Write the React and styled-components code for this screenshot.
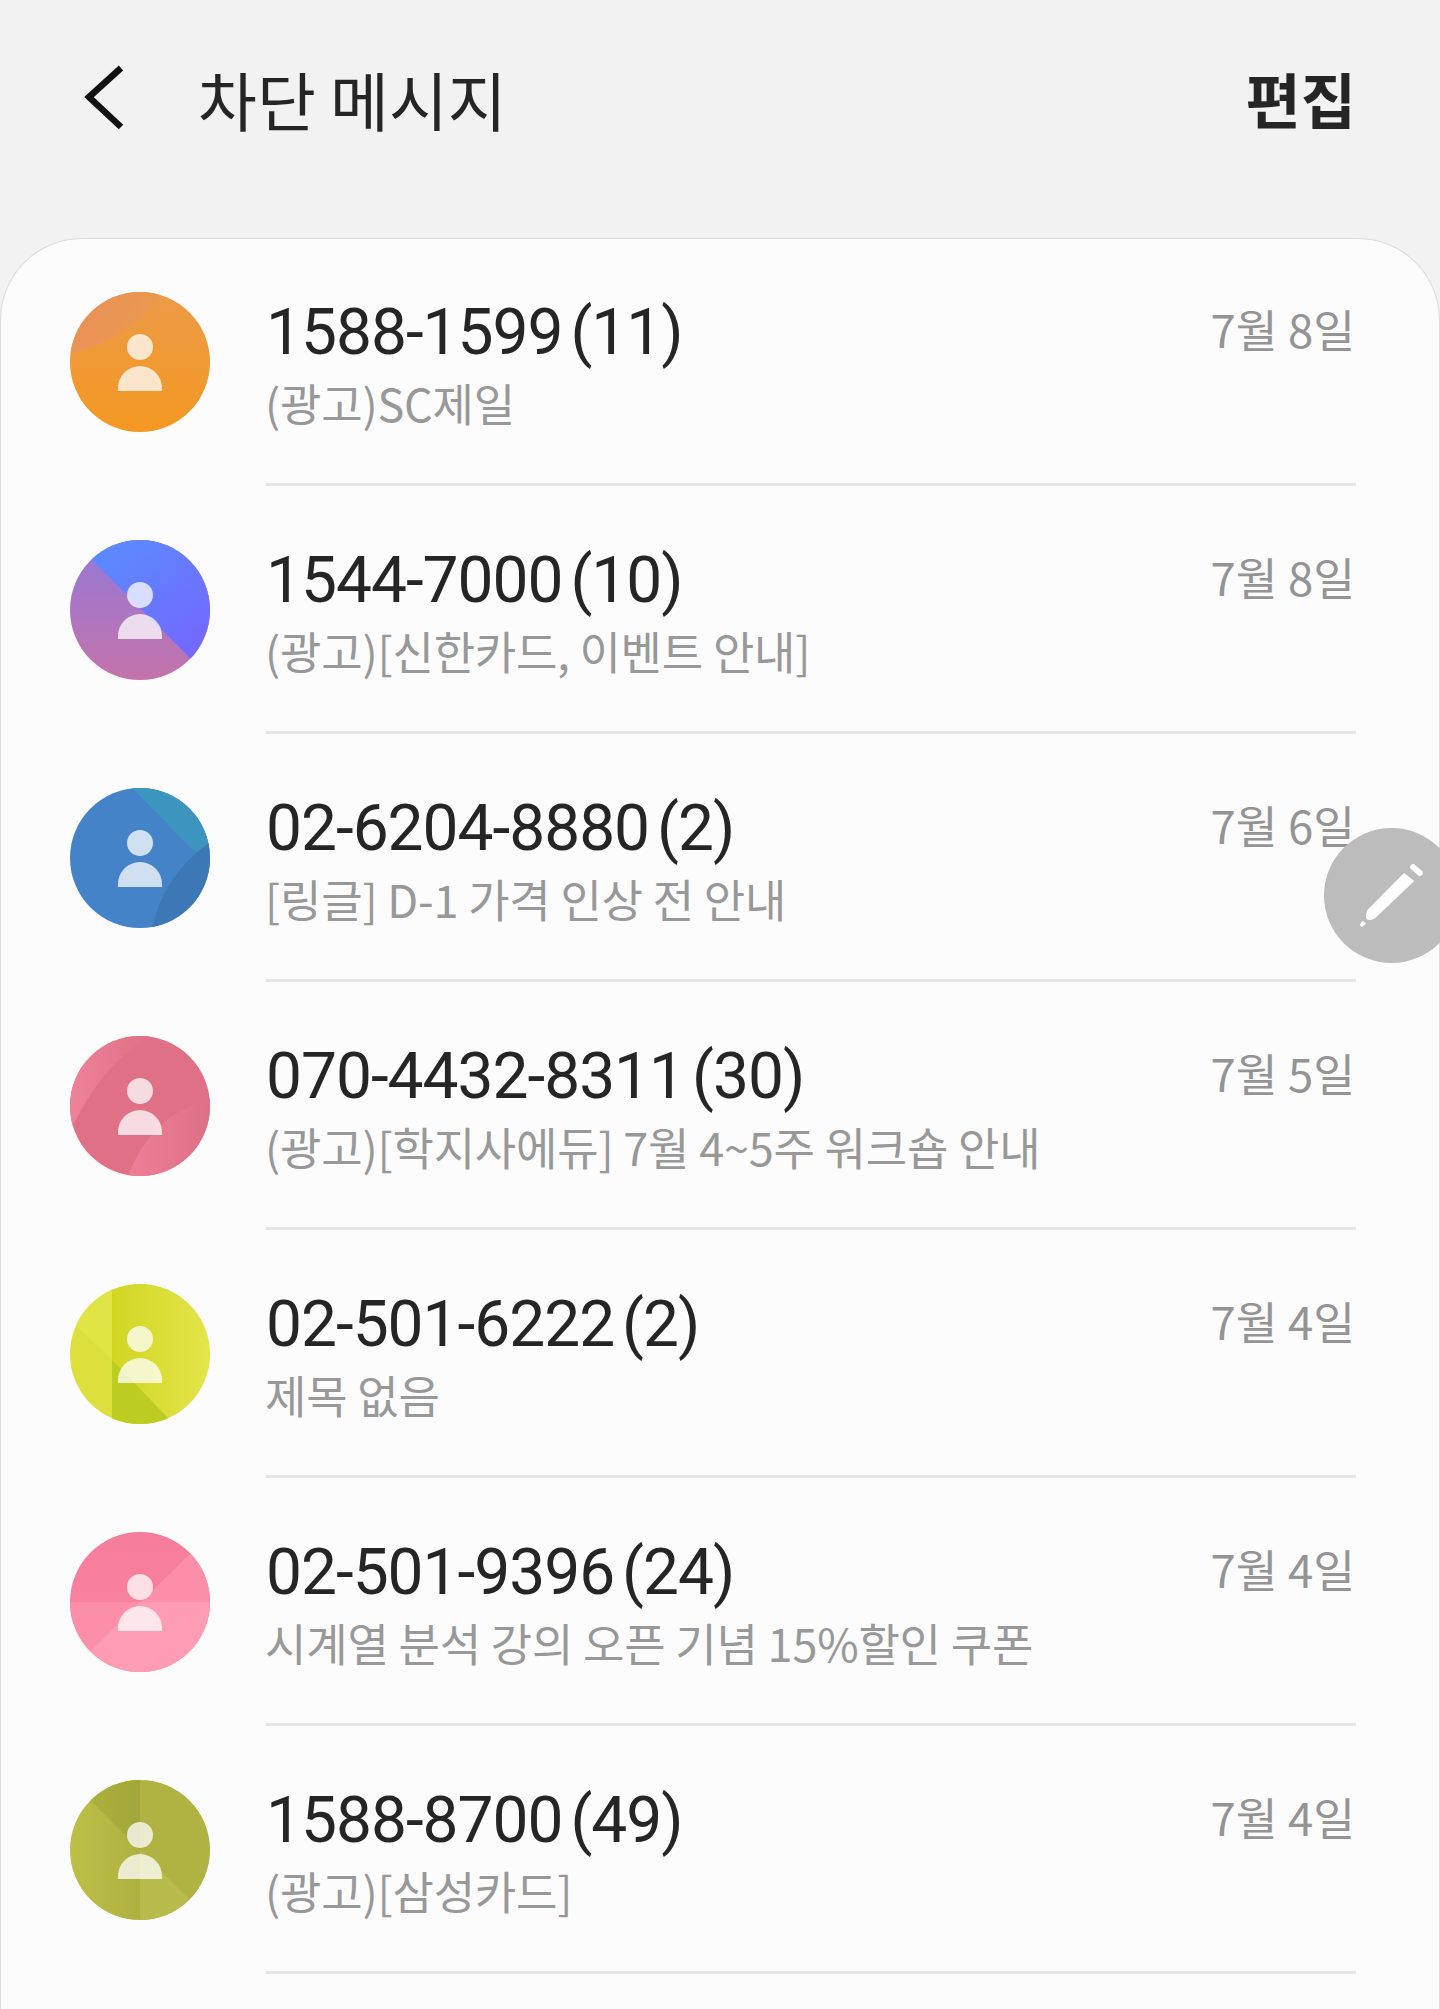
import React from 'react';
import styled, { createGlobalStyle } from 'styled-components';

const GlobalStyle = createGlobalStyle`
  html, body {
    margin: 0;
    padding: 0;
    height: 2009px;
    overflow: hidden;
    background: #f2f2f2;
  }
`;

const Page = styled.div`
  position: relative;
  width: 1440px;
  height: 2009px;
  overflow: hidden;
  background: #f2f2f2;
  font-family: "Noto Sans CJK KR", "Noto Sans", sans-serif;
`;

const Toolbar = styled.header`
  height: 238px;
  box-sizing: border-box;
  padding: 56px 84px 0 82px;
  display: flex;
  align-items: flex-start;
`;

const BackIcon = styled.svg`
  width: 44px;
  height: 68px;
  margin: 7px 72px 0 0;
  flex: none;
`;

const Title = styled.h1`
  margin: 0;
  flex: 1;
  font-size: 64px;
  line-height: 84px;
  font-weight: 400;
  color: #252525;
`;

const EditButton = styled.button`
  border: 0;
  padding: 0;
  background: none;
  font: inherit;
  font-size: 60px;
  line-height: 84px;
  font-weight: 700;
  color: #252525;
`;

const Card = styled.main`
  height: 1771px;
  box-sizing: border-box;
  background: #fcfcfc;
  border: 1px solid #dcdcdc;
  border-bottom: 0;
  border-radius: 82px 82px 0 0;
`;

const Row = styled.div`
  height: 248px;
  box-sizing: border-box;
  padding: 0 83px 0 69px;
  display: flex;
`;

const Circle = styled.svg`
  width: 140px;
  height: 140px;
  margin: 53px 56px 0 0;
  flex: none;
  border-radius: 50%;
`;

const RowBody = styled.div`
  flex: 1;
  min-width: 0;
  box-sizing: border-box;
  margin-bottom: 1px;
  padding-top: 56px;
  border-bottom: 3px solid #e6e6e6;
  display: flex;
  justify-content: space-between;
  align-items: flex-start;
`;

const Texts = styled.div`
  display: flex;
  flex-direction: column;
`;

const Sender = styled.div`
  font-family: Roboto, "Liberation Sans", sans-serif;
  font-size: 64px;
  line-height: 76px;
  letter-spacing: -1px;
  color: #252525;
  white-space: nowrap;
`;

const Count = styled.span`
  margin-left: 8px;
`;

const Preview = styled.div`
  font-size: 45px;
  line-height: 64px;
  letter-spacing: -0.2px;
  margin-left: -1px;
  color: #989898;
  white-space: nowrap;
`;

const DateText = styled.div`
  font-size: 45.5px;
  line-height: 64px;
  margin-top: 1px;
  padding-right: 1px;
  color: #949494;
  white-space: nowrap;
`;

const Fab = styled.button`
  position: absolute;
  left: 1324px;
  top: 828px;
  width: 135px;
  height: 135px;
  border: 0;
  padding: 0;
  border-radius: 50%;
  background: #bcbcbc;
`;

const PencilIcon = styled.svg`
  position: absolute;
  left: 16px;
  top: 22px;
  width: 100px;
  height: 90px;
`;

const grad = (id, x1, y1, x2, y2, from, to) => (
  <linearGradient id={id} gradientUnits="userSpaceOnUse" x1={x1} y1={y1} x2={x2} y2={y2}>
    <stop offset="0" stopColor={from} />
    <stop offset="1" stopColor={to} />
  </linearGradient>
);

const avatars = {
  orange: {
    defs: [
      grad('o1', 70, 0, 70, 140, '#ec9b48', '#f39822'),
      grad('o2', 0, 0, 80, 50, '#e88f5c', '#eb9a4c'),
    ],
    shapes: [
      ['M0 0H140V140H0Z', 'url(#o1)'],
      ['M0 0H92Q70 42 0 62Z', 'url(#o2)'],
    ],
  },
  violet: {
    defs: [
      grad('v1', 40, 0, 120, 110, '#5a8bff', '#7369ff'),
      grad('v2', 70, 20, 70, 140, '#9a78d2', '#c473aa'),
    ],
    shapes: [
      ['M0 0H140V140H0Z', 'url(#v2)'],
      ['M0 -2L142 140V-2Z', 'url(#v1)'],
    ],
  },
  blue: {
    defs: [],
    shapes: [
      ['M0 0H140V140H0Z', '#4483c8'],
      ['M62 0L126 65L140 54V0Z', '#3b95be'],
      ['M140 54L126 65Q92 96 82 140H140Z', '#3c77b6'],
    ],
  },
  rose: {
    defs: [
      grad('r1', 0, 60, 80, 60, '#ed8298', '#df7086'),
      grad('r2', 60, 100, 140, 100, '#ec7f96', '#de7086'),
    ],
    shapes: [
      ['M0 0H140V140H0Z', '#df7085'],
      ['M0 0H80Q30 30 0 96Z', 'url(#r1)'],
      ['M58 140Q80 80 140 62V140Z', 'url(#r2)'],
    ],
  },
  lime: {
    defs: [grad('l1', 42, 0, 140, 0, '#d2d623', '#e3e549')],
    shapes: [
      ['M0 0H42V140H0Z', '#dcdf3c'],
      ['M0 36L42 76V0H0Z', '#e0e445'],
      ['M42 0H140V140H42Z', 'url(#l1)'],
      ['M42 76L104 140H42Z', '#bdcc20'],
    ],
  },
  pink: {
    defs: [grad('p1', 30, 0, 30, 130, '#f67c9c', '#f9859f')],
    shapes: [
      ['M0 0H140V140H0Z', 'url(#p1)'],
      ['M0 140L140 2V70H0Z', '#fb8ea9'],
      ['M70 70L0 140H140V70Z', '#fe9cb5'],
      ['M0 140L70 70H140V140Z', '#fe9cb5'],
    ],
  },
  olive: {
    defs: [
      grad('g1', 0, 0, 70, 0, '#b0b43e', '#a1a73a'),
      grad('g2', 0, 0, 70, 0, '#bcc048', '#afb13f'),
    ],
    shapes: [
      ['M70 0H140V140H70Z', '#b0b242'],
      ['M0 0H70V140H0Z', 'url(#g2)'],
      ['M0 0H70V70Z', 'url(#g1)'],
      ['M70 70L140 140H70Z', '#b9bc4c'],
    ],
  },
};

const Avatar = ({ kind }) => (
  <Circle viewBox="0 0 140 140">
    <defs>{avatars[kind].defs.map((d, i) => React.cloneElement(d, { key: i }))}</defs>
    {avatars[kind].shapes.map(([d, fill], i) => (
      <path key={i} d={d} fill={fill} />
    ))}
    <circle cx="70" cy="55" r="13" fill="#fff" fillOpacity="0.75" />
    <path d="M48 99V96A22 22 0 0 1 92 96V99Z" fill="#fff" fillOpacity="0.75" />
  </Circle>
);

const messages = [
  { kind: 'orange', sender: '1588-1599', count: 11, preview: '(광고)SC제일', date: '7월 8일' },
  { kind: 'violet', sender: '1544-7000', count: 10, preview: '(광고)[신한카드, 이벤트 안내]', date: '7월 8일' },
  { kind: 'blue', sender: '02-6204-8880', count: 2, preview: '[링글] D-1 가격 인상 전 안내', date: '7월 6일' },
  { kind: 'rose', sender: '070-4432-8311', count: 30, preview: '(광고)[학지사에듀] 7월 4~5주 워크숍 안내', date: '7월 5일' },
  { kind: 'lime', sender: '02-501-6222', count: 2, preview: '제목 없음', date: '7월 4일' },
  { kind: 'pink', sender: '02-501-9396', count: 24, preview: '시계열 분석 강의 오픈 기념 15%할인 쿠폰', date: '7월 4일' },
  { kind: 'olive', sender: '1588-8700', count: 49, preview: '(광고)[삼성카드]', date: '7월 4일' },
];

export default function App() {
  return (
    <Page>
      <GlobalStyle />
      <Toolbar>
        <BackIcon viewBox="0 0 44 68" fill="none">
          <path d="M39 5L7 34L39 64" stroke="#111" strokeWidth="6.5" />
        </BackIcon>
        <Title>차단 메시지</Title>
        <EditButton>편집</EditButton>
      </Toolbar>
      <Card>
        {messages.map((m) => (
          <Row key={m.sender}>
            <Avatar kind={m.kind} />
            <RowBody>
              <Texts>
                <Sender>
                  {m.sender}
                  <Count>({m.count})</Count>
                </Sender>
                <Preview>{m.preview}</Preview>
              </Texts>
              <DateText>{m.date}</DateText>
            </RowBody>
          </Row>
        ))}
      </Card>
      <Fab>
        <PencilIcon viewBox="0 0 300 270">
          <path d="M219 51L240 69" stroke="#fff" strokeWidth="17" strokeLinecap="round" fill="none" />
          <path d="M192 69L223 93L106 204Q92 214 80 208Q74 196 84 178Z" fill="#fff" />
          <path d="M68 212L79 221L67 230Q59 230 60 222Z" fill="#fff" />
        </PencilIcon>
      </Fab>
    </Page>
  );
}
